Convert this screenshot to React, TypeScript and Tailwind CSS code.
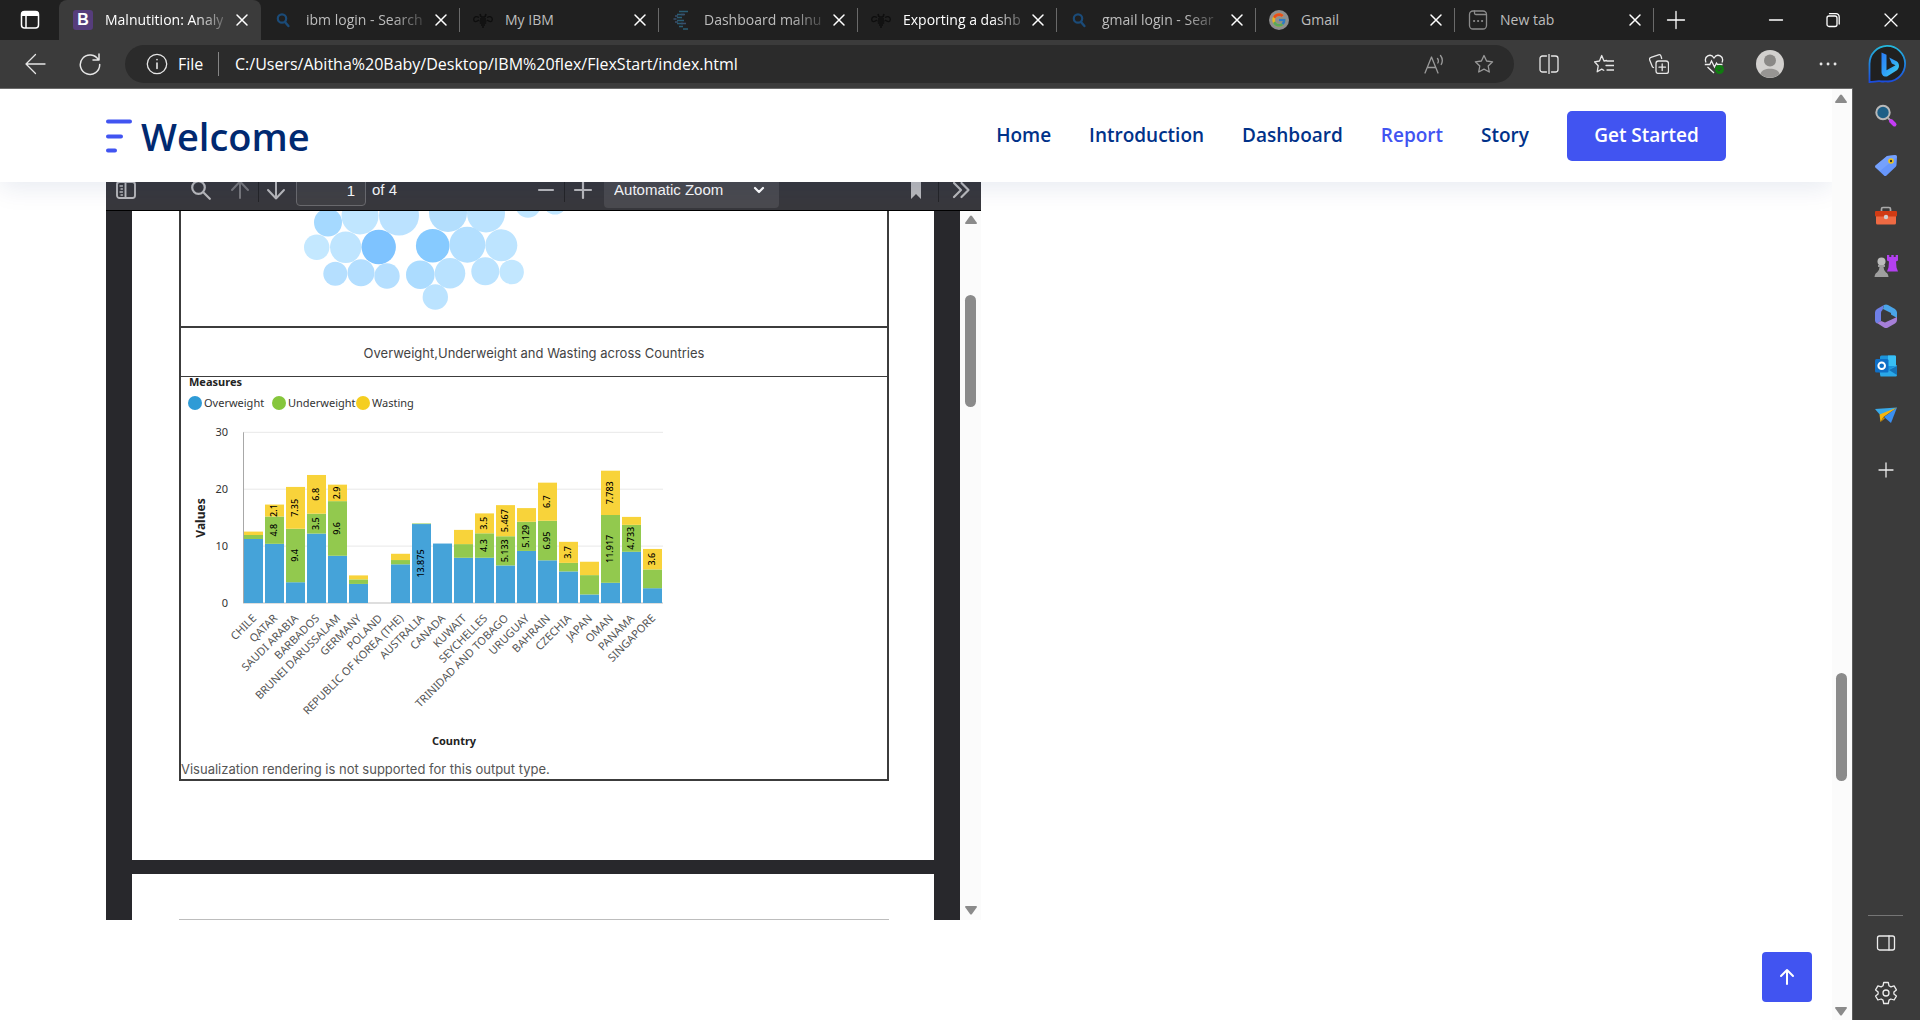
import React from "react";
import { FcGoogle } from "react-icons/fc";

type IconProps = { className?: string; children: React.ReactNode; box?: string };

function Line({ className = "size-5", children, box = "0 0 20 20" }: IconProps) {
  return (
    <svg viewBox={box} className={className} fill="none" stroke="currentColor" strokeWidth="1.3" strokeLinecap="round" strokeLinejoin="round" aria-hidden="true">
      {children}
    </svg>
  );
}

/* ---------- tab favicons ---------- */

const BootstrapIcon = () => (
  <span className="flex size-5 items-center justify-center rounded-[3px] bg-[#563d7c] font-['Liberation_Sans'] text-base font-bold leading-none text-white">B</span>
);

const SearchFavicon = () => (
  <Line className="size-5 text-[#1b4b78]">
    <circle cx="8" cy="8.5" r="4.2" strokeWidth="2.2" />
    <path d="M11 12l3.4 4" strokeWidth="2.4" />
  </Line>
);

const BeeIcon = () => (
  <svg viewBox="0 0 20 20" className="size-5" fill="none" stroke="#0e0e0e" strokeWidth="1.3" aria-hidden="true">
    <path d="M6 7.5C3 5.5 .6 7 .7 9.500s2.300 3 5.300.5M14 7.500c3-2 5.400-.5 5.300 2s-2.300 3-5.300.5" />
    <path d="M7 9h6M6.500 11h7M6.800 13h6.400M8 15h4M9 17h2M8 7l-1-3M12 7l1-3M8 7h4" strokeWidth="1.6" />
  </svg>
);

const IbmCloudIcon = () => (
  <svg viewBox="0 0 20 20" className="size-5" fill="none" strokeWidth="1.3" aria-hidden="true">
    <path d="M7 1.500h9M5 4.500h7M5 7.500h5M5 10.500h7M5 13.500h6M7 16.500h4M11 19h5" stroke="#2a5d74" />
    <path d="M3 6h3M1.500 9h3M3 12h3M9 4.500h4M9 13.500h5" stroke="#38506e" />
  </svg>
);

const GoogleIcon = () => (
  <span className="flex size-5 items-center justify-center rounded-full bg-[#8f8f8f]">
    <FcGoogle className="size-4 opacity-80" />
  </span>
);

const NewTabIcon = () => (
  <Line className="size-5 text-[#8a8a8a]">
    <rect x="1.500" y="1" width="17" height="18" rx="3.500" />
    <path d="M6.500 1v2q0 1.500 1.500 1.500h10" />
    <path d="M6 11h.2M10 11h.2M14 11h.2" strokeWidth="2" />
  </Line>
);

const tabs = [
  { title: "Malnutition: Analy", icon: <BootstrapIcon />, active: true, bright: true, fade: true },
  { title: "ibm login - Search", icon: <SearchFavicon />, fade: true },
  { title: "My IBM", icon: <BeeIcon /> },
  { title: "Dashboard malnu", icon: <IbmCloudIcon />, fade: true },
  { title: "Exporting a dashb", icon: <BeeIcon />, bright: true, fade: true },
  { title: "gmail login - Sear", icon: <SearchFavicon />, fade: true },
  { title: "Gmail", icon: <GoogleIcon /> },
  { title: "New tab", icon: <NewTabIcon /> },
];

function TabBar() {
  return (
    <div className="flex h-10 shrink-0 bg-[#202020] text-white">
      <button aria-label="Tab actions" className="flex w-[59px] shrink-0 items-center justify-center">
        <svg viewBox="0 0 20 20" className="size-5" aria-hidden="true">
          <rect x="1.500" y="1.500" width="17" height="16.500" rx="3" fill="none" stroke="#fff" strokeWidth="1.500" />
          <path d="M1.500 6V4a3 3 0 013-3h11a3 3 0 013 3v2z" fill="#fff" />
          <path d="M6 6v12" stroke="#fff" strokeWidth="1.500" />
        </svg>
      </button>
      <div className="flex min-w-0">
        {tabs.map((t, i) => (
          <div key={i} className={t.active ? "flex w-[202px] items-center rounded-t-lg bg-[#3b3b3b] pl-3.5" : "flex w-[199px] items-center pl-[13px]"}>
            <button className="flex min-w-0 flex-1 items-center gap-3">
              <span className="shrink-0">{t.icon}</span>
              <span
                className={
                  "whitespace-nowrap text-left text-sm " +
                  (t.fade ? "[mask-image:linear-gradient(to_right,black_75%,rgba(0,0,0,0.25))] " : "") +
                  (t.bright ? "text-white" : "text-[#bdbdbd]")
                }
              >
                {t.title}
              </span>
            </button>
            <button aria-label={"Close " + t.title} className="mr-2.5 shrink-0">
              <Line className="size-4" box="0 0 16 16">
                <path d="M3 3l10 10M13 3L3 13" strokeWidth="1.5" />
              </Line>
            </button>
            <span className={t.active ? "w-px" : "h-6 w-px bg-[#6a6a6a]"} />
          </div>
        ))}
      </div>
      <button aria-label="Open new tab" className="flex w-11 items-center justify-center">
        <Line className="size-5">
          <path d="M10 1.500v17M1.500 10h17" />
        </Line>
      </button>
      <div className="ml-auto flex">
        <button aria-label="Minimize" className="flex w-[57px] items-center justify-center">
          <Line className="size-4" box="0 0 16 16"><path d="M1.500 8h13" /></Line>
        </button>
        <button aria-label="Restore" className="flex w-[57px] items-center justify-center">
          <Line className="size-4" box="0 0 16 16">
            <rect x="2" y="4" width="10" height="10.500" rx="2" />
            <path d="M4.500 1.700H11a3 3 0 013.200 3V12" />
          </Line>
        </button>
        <button aria-label="Close window" className="flex w-[59px] items-center justify-center">
          <Line className="size-4" box="0 0 16 16"><path d="M2 2l12 12M14 2L2 14" /></Line>
        </button>
      </div>
    </div>
  );
}

const STAR = "M10 1.500l2.600 5.500 6 .8-4.400 4.200 1.100 6L10 15.100 4.700 18l1.100-6L1.400 7.800l6-.8z";

function AddressBar() {
  return (
    <div className="flex h-12 shrink-0 items-center bg-[#3b3b3b] text-[#e6e6e6]">
      <button aria-label="Back" className="flex w-[70px] items-center justify-center">
        <Line className="size-6" box="0 0 24 24"><path d="M22 12H3M12.500 2.500L3 12l9.500 9.500" /></Line>
      </button>
      <button aria-label="Refresh" className="flex w-10 items-center justify-center">
        <Line className="size-6" box="0 0 24 24">
          <path d="M20.500 8A9.700 9.700 0 1021.700 12.500M21 2v6h-6" strokeWidth="1.500" />
        </Line>
      </button>
      <div className="ml-[15px] flex h-[38px] flex-1 items-center rounded-full bg-[#2b2b2b] pl-[21px] pr-5">
        <Line className="size-[22px]" box="0 0 22 22">
          <circle cx="11" cy="11" r="9.700" />
          <path d="M11 10v5.500M11 6.500v.3" strokeWidth="1.600" />
        </Line>
        <span className="ml-2.5 w-[30px] text-base text-white">File</span>
        <span className="ml-2.5 h-6 w-px bg-[#858585]" />
        <input aria-label="Address" readOnly value="C:/Users/Abitha%20Baby/Desktop/IBM%20flex/FlexStart/index.html" className="ml-4 min-w-0 flex-1 bg-transparent text-base text-white outline-none" />
        <div className="flex items-center gap-[30px] text-[#9a9a9a]">
          <button aria-label="Read aloud">
            <Line>
              <path d="M1 19L7.500 3 14 19M3.300 13.500h8.400M13.500 4.500c1 1.300 1 3.200.3 4.500M16.500 1.500c2 2.600 2.200 6.200.7 9" />
            </Line>
          </button>
          <button aria-label="Add to favorites"><Line><path d={STAR} /></Line></button>
        </div>
      </div>
      <div className="ml-[25px] flex items-center gap-[35px]">
        <button aria-label="Split screen">
          <Line>
            <path d="M7.500 2H3.500A2.500 2.500 0 001 4.500v11A2.500 2.500 0 003.500 18h4M12.500 2h4A2.500 2.500 0 0119 4.500v11a2.500 2.500 0 01-2.500 2.500h-4M10 0v20" />
          </Line>
        </button>
        <button aria-label="Favorites">
          <Line>
            <path d="M12.500 6.500L10 7l-2.300-5.500L5.500 7l-5 .8 3.700 4-1 6 4.500-2.700 2 1.200M13 7h7M12 11.500h8M13 16h7" />
          </Line>
        </button>
        <button aria-label="Collections">
          <Line>
            <rect x="7" y="7" width="12.500" height="12.500" rx="2.500" />
            <path d="M13.200 10v6.500M10 13.200h6.500M4.500 13.500L3.500 13 .7 6a2 2 0 011.300-2.700L9.500.8a2 2 0 012.500 1.300l.7 2.400" />
          </Line>
        </button>
        <button aria-label="Browser essentials">
          <svg viewBox="0 0 20 20" className="size-5" aria-hidden="true">
            <path d="M2 8.500C-.5 2.500 6.500-1.500 10 4c3.500-5.500 10.500-1.500 8 4.500M.8 10.500h5L7.500 7l3 6 2-4 1 1.500h5M3.500 13L10 19" fill="none" stroke="#eee" strokeWidth="1.300" />
            <circle cx="15.500" cy="15.500" r="4.500" fill="#107c10" />
            <path d="M13.500 15.500l1.500 1.500 2.500-3" stroke="#3b3b3b" fill="none" />
          </svg>
        </button>
      </div>
      <button aria-label="Profile" className="ml-8">
        <svg viewBox="0 0 28 28" className="size-7" aria-hidden="true">
          <circle cx="14" cy="14" r="14" fill="#d2d0ce" />
          <circle cx="14" cy="10.500" r="6" fill="#8a8886" />
          <path d="M4.500 24c1-7 18-7 19 0A14 14 0 014.500 24z" fill="#979593" />
        </svg>
      </button>
      <button aria-label="Settings and more" className="ml-[34px]">
        <Line><path d="M3 10h.1M10 10h.1M17 10h.1" strokeWidth="2.800" /></Line>
      </button>
      <button aria-label="Bing chat" className="ml-[30px] mr-3.5">
        <svg viewBox="0 0 38 38" className="size-[38px]" aria-hidden="true">
          <defs>
            <linearGradient id="bingRing" x1="0" y1="0" x2="0" y2="1">
              <stop offset="0" stopColor="#24b8dc" />
              <stop offset="1" stopColor="#1b4bdc" />
            </linearGradient>
            <linearGradient id="bingB" x1="0" y1="0" x2="1" y2="1">
              <stop offset="0" stopColor="#2b7cf5" />
              <stop offset=".5" stopColor="#2f9ff8" />
              <stop offset="1" stopColor="#3fd6e6" />
            </linearGradient>
          </defs>
          <path d="M1.500 37V19A17.800 17.800 0 1120 36.500c-3-.2-5 .2-7-.2-4-.6-7 .7-11.500.7z" fill="#202020" stroke="url(#bingRing)" strokeWidth="1.800" />
          <path d="M13.500 7.500l5 2.200v15.500l9-5-3.700-1.800-2.600-6 7.800 4c3 2.500 2.500 7-.5 9l-9.500 6c-3 1-5.500-1.500-5.500-4.500z" fill="url(#bingB)" />
        </svg>
      </button>
    </div>
  );
}

/* ---------- site header ---------- */

const nav = ["Home", "Introduction", "Dashboard", "Report", "Story"];

function SiteHeader() {
  return (
    <header className="relative z-10 h-[93px] shrink-0 bg-white shadow-[0_5px_25px_rgba(1,41,112,0.1)]">
      <div className="mx-auto flex h-full w-full max-w-[1620px] items-center justify-between">
        <a href="#home" className="flex items-center gap-2 text-[#012970]">
          <svg viewBox="0 0 27 34" className="h-[34px] w-[27px]" stroke="#4154f1" strokeWidth="4" strokeLinecap="round" aria-hidden="true">
            <path d="M2 2.500h22M2 17.500h13M2 31.500h7" />
          </svg>
          <span className="text-[38px] font-semibold leading-none">Welcome</span>
        </a>
        <nav className="flex items-center gap-[38px] text-[19px] font-semibold text-[#013289]">
          {nav.map((n) => (
            <a key={n} href={"#" + n.toLowerCase()} className={n === "Report" ? "text-[#4154f1]" : ""}>{n}</a>
          ))}
          <a href="#start" className="flex h-[50px] w-[159px] items-center justify-center rounded-[5px] bg-[#4154f1] text-white">Get Started</a>
        </nav>
      </div>
    </header>
  );
}

/* ---------- embedded report ---------- */

const bubbles: [number, number, number, string][] = [
  [328, 222.500, 14, "#a5d9ff"], [360, 216, 18.500, "#c0e6ff"], [399, 215.500, 20, "#bbe2ff"],
  [448, 213, 19, "#b3defd"], [486, 213.500, 19, "#bbe3ff"], [528, 205, 12.700, "#c0e6ff"], [555, 203, 11.500, "#c0e6ff"],
  [316.700, 247.300, 12.700, "#c4e8ff"], [345.700, 247.300, 15.700, "#bfe5ff"], [378.700, 247, 17.200, "#7ec3ff"],
  [432.700, 245.700, 16.800, "#86caff"], [467.300, 244.700, 18, "#b3dfff"], [501.300, 245.300, 16, "#bde4ff"],
  [335.300, 273.700, 12, "#b5dfff"], [361, 272.700, 13.500, "#b3deff"], [387, 276, 12.700, "#b5dfff"],
  [420.300, 274.700, 14.300, "#acdcff"], [450, 273.300, 15.300, "#b9e2ff"], [485.300, 271.300, 14, "#bbe3ff"],
  [511.700, 272, 12.200, "#c2e7ff"], [435.300, 297, 12.700, "#bbe3ff"],
];

type Bar = { name: string; v: [number, number, number]; labels?: [string?, string?, string?] };

const bars: Bar[] = [
  { name: "CHILE", v: [11.25, 0.7, 0.6] },
  { name: "QATAR", v: [10.4, 4.8, 2.1], labels: [, "4.8", "2.1"] },
  { name: "SAUDI ARABIA", v: [3.65, 9.4, 7.35], labels: [, "9.4", "7.35"] },
  { name: "BARBADOS", v: [12.2, 3.5, 6.8], labels: [, "3.5", "6.8"] },
  { name: "BRUNEI DARUSSALAM", v: [8.3, 9.6, 2.9], labels: [, "9.6", "2.9"] },
  { name: "GERMANY", v: [3.35, 0.8, 0.7] },
  { name: "POLAND", v: [0, 0, 0] },
  { name: "REPUBLIC OF KOREA (THE)", v: [6.8, 0.75, 1.1] },
  { name: "AUSTRALIA", v: [13.875, 0.1, 0], labels: ["13.875"] },
  { name: "CANADA", v: [10.45, 0, 0] },
  { name: "KUWAIT", v: [7.95, 2.4, 2.5] },
  { name: "SEYCHELLES", v: [7.95, 4.3, 3.5], labels: [, "4.3", "3.5"] },
  { name: "TRINIDAD AND TOBAGO", v: [6.6, 5.133, 5.467], labels: [, "5.133", "5.467"] },
  { name: "URUGUAY", v: [9.15, 5.129, 2.4], labels: [, "5.129"] },
  { name: "BAHRAIN", v: [7.5, 6.95, 6.7], labels: [, "6.95", "6.7"] },
  { name: "CZECHIA", v: [5.55, 1.5, 3.7], labels: [, , "3.7"] },
  { name: "JAPAN", v: [1.5, 3.4, 2.35] },
  { name: "OMAN", v: [3.55, 11.917, 7.783], labels: [, "11.917", "7.783"] },
  { name: "PANAMA", v: [9, 4.733, 1.4], labels: [, "4.733"] },
  { name: "SINGAPORE", v: [2.6, 3.3, 3.6], labels: [, , "3.6"] },
];

const fills = ["#45a3d9", "#92c94e", "#f8d33a"];

function StackedBarChart() {
  const base = 226;
  const unit = 5.69;
  return (
    <svg viewBox="1 0 500 380" className="h-[380px] w-[500px] font-['Noto_Sans'] text-[11px]" fill="#333" role="img" aria-label="Overweight, Underweight and Wasting by country">
      <text x="9" y="9" fontWeight="700" fill="#222">Measures</text>
      {[
        { x: 15, c: "#2f9bd6", t: "Overweight" },
        { x: 99, c: "#86c63c", t: "Underweight" },
        { x: 183, c: "#f5ce20", t: "Wasting" },
      ].map((l) => (
        <g key={l.t}>
          <circle cx={l.x} cy="26" r="7" fill={l.c} />
          <text x={l.x + 9} y="30">{l.t}</text>
        </g>
      ))}
      {[30, 20, 10, 0].map((n) => (
        <g key={n}>
          <path d={`M63 ${base - n * unit}h420`} stroke={n ? "#e8e8e8" : "#bdbdbd"} />
          <text x="48" y={base - n * unit + 4} textAnchor="end">{n}</text>
        </g>
      ))}
      <path d={`M63.500 ${base - 30 * unit}V${base}`} stroke="#a8a8a8" />
      <text transform="translate(25 141) rotate(-90)" textAnchor="middle" fontSize="12" fontWeight="700" fill="#222">Values</text>
      {bars.map((b, i) => {
        let sum = 0;
        const x = 64 + i * 21;
        return (
          <g key={b.name}>
            {b.v.map((v, k) => {
              const y = base - (sum + v) * unit;
              const mid = y + (v * unit) / 2;
              sum += v;
              const label = b.labels?.[k];
              return (
                <g key={k}>
                  <rect x={x} y={y} width="19" height={v * unit} fill={fills[k]} />
                  {label && (
                    <text transform={`translate(${x + 12} ${mid}) rotate(-90)`} textAnchor="middle" fontSize="9" fontWeight="500" fill="#000">{label}</text>
                  )}
                </g>
              );
            })}
            <text transform={`translate(${x + 13} 242) rotate(-45)`} textAnchor="end" fill="#555">{b.name}</text>
          </g>
        );
      })}
      <text x="274" y="368" textAnchor="middle" fontWeight="700" fill="#222">Country</text>
    </svg>
  );
}

const Triangle = ({ down }: { down?: boolean }) => (
  <svg viewBox="0 0 12 9" className="h-[9px] w-3" fill="#8b8b8b" aria-hidden="true">
    <path d={down ? "M0 1Q0 0 1 0h10q1 0 1 1L7 8q-1 1-2 0z" : "M0 8q0 1 1 1h10q1 0 1-1L7 1Q6 0 5 1z"} />
  </svg>
);

function PdfToolbar() {
  return (
    <div className="flex h-[41px] shrink-0 items-center border-b border-black bg-[#38383d] pl-2.5 font-['Liberation_Sans'] text-[15px] text-[#b8b8bb]">
      <button aria-label="Toggle sidebar">
        <Line className="size-5">
          <rect x="1" y="2" width="18" height="16" rx="2.500" strokeWidth="1.900" />
          <path d="M9.500 2v16" strokeWidth="1.900" />
          <path d="M4 6h2.500M5 9h1.500M4 12h2.500M5 15h1.500" />
        </Line>
      </button>
      <button aria-label="Find" className="ml-[55px]">
        <Line className="size-5"><circle cx="7.500" cy="7.500" r="6.300" strokeWidth="2.200" /><path d="M12.500 12.500l6.300 6.300" strokeWidth="2.200" /></Line>
      </button>
      <button aria-label="Previous page" className="ml-[19px] text-[#77777b]" disabled>
        <Line className="size-5"><path d="M10 18V1.500M2 10l8-8.500 8 8.500" strokeWidth="2" /></Line>
      </button>
      <span className="ml-2 mr-[7px] h-6 w-px bg-[#242427]" />
      <button aria-label="Next page">
        <Line className="size-5"><path d="M10 2v16.500M2 10l8 8.500 8-8.500" strokeWidth="2" /></Line>
      </button>
      <input aria-label="Page" defaultValue="1" className="ml-2.5 h-8 w-[70px] rounded-sm border border-[#6a6a6e] bg-[#404044] pr-2.5 text-right text-[#f9f9fa]" />
      <span className="ml-1.5 text-[#f9f9fa]">of 4</span>
      <button aria-label="Zoom out" className="ml-[139px]">
        <Line className="size-5"><path d="M3 10h14" strokeWidth="2.200" /></Line>
      </button>
      <span className="mx-2 h-6 w-px bg-[#242427]" />
      <button aria-label="Zoom in">
        <Line className="size-5"><path d="M2 10h16M10 2v16" strokeWidth="2.200" /></Line>
      </button>
      <div className="relative ml-[11px]">
        <select aria-label="Zoom" className="h-9 w-[175px] appearance-none rounded-sm bg-[#4a4a4f] pl-2.5 text-[#f9f9fa]">
          <option>Automatic Zoom</option>
        </select>
        <Line className="pointer-events-none absolute right-3.5 top-3 size-3 text-white" box="0 0 12 12"><path d="M2 4l4 4 4-4" strokeWidth="2.200" /></Line>
      </div>
      <button aria-label="Current view" className="ml-auto mr-[17px]">
        <svg viewBox="0 0 10 18" className="h-[18px] w-2.5" fill="currentColor" aria-hidden="true"><path d="M0 0h10v18l-5-5-5 5z" /></svg>
      </button>
      <span className="h-6 w-px bg-[#242427]" />
      <button aria-label="Tools" className="ml-3 mr-2.5">
        <Line className="size-5"><path d="M3 3l7 7-7 7M10.500 3l7 7-7 7" strokeWidth="2.200" /></Line>
      </button>
    </div>
  );
}

function PdfViewer() {
  return (
    <section aria-label="Report" className="-mt-3 flex h-[750px] w-[875px] max-w-full shrink-0 flex-col">
      <PdfToolbar />
      <div className="flex min-h-0 flex-1">
        <div className="flex min-w-0 flex-1 flex-col gap-3.5 overflow-hidden bg-[#28282c] px-[26px]">
          <article className="h-[649px] shrink-0 bg-white pl-[47px] pr-[45px]">
            <div className="border-x-2 border-b-2 border-[#3c3c3c]">
              <svg viewBox="181 211 706 115" className="block h-[115px] w-full" aria-hidden="true">
                {bubbles.map(([x, y, r, c], i) => (
                  <circle key={i} cx={x} cy={y} r={r} fill={c} />
                ))}
              </svg>
              <h2 className="flex h-[51px] items-center justify-center border-b border-t-2 border-[#3c3c3c] pt-1 font-['Inter'] text-[13px] text-[#444]">
                Overweight,Underweight and Wasting across Countries
              </h2>
              <StackedBarChart />
              <p className="pt-0.5 font-['Inter'] text-[13px] leading-5 text-[#555]">Visualization rendering is not supported for this output type.</p>
            </div>
          </article>
          <article className="h-40 shrink-0 bg-white pl-[47px] pr-[45px] pt-[45px]">
            <hr className="border-[#bdbdbd]" />
          </article>
        </div>
        <div className="flex w-[21px] flex-col items-center bg-[#fbfbfb] pb-[5px] pt-1">
          <Triangle />
          <div className="mt-[71px] h-28 w-[11px] rounded-full bg-[#8b8b8b]" />
          <div className="mt-auto"><Triangle down /></div>
        </div>
      </div>
    </section>
  );
}

/* ---------- browser sidebar ---------- */

const Art = ({ children }: { children: React.ReactNode }) => (
  <svg viewBox="0 0 24 24" className="size-6" aria-hidden="true">{children}</svg>
);

const apps = [
  {
    name: "Search",
    art: (
      <Art>
        <path d="M14 14l3 3" stroke="#aaa" strokeWidth="2" />
        <path d="M17 17l3.500 3.500" stroke="#c53cf5" strokeWidth="4" strokeLinecap="round" />
        <circle cx="9" cy="8.500" r="6.700" fill="#1d5f86" stroke="#b9b9b9" strokeWidth="2" />
      </Art>
    ),
  },
  {
    name: "Shopping",
    art: (
      <Art>
        <path d="M13 2l8-1q2 0 2 2l-.5 8q0 1-1 2l-9 8.500q-1.500 1-2.500 0L1.500 13.500q-1-1 0-2z" fill="#6796fb" />
        <path d="M13 2l8-1q2 0 2 2L6 17l-4.500-3.500q-1-1 0-2z" fill="#7fa8ff" opacity=".6" />
        <circle cx="17" cy="7" r="2" fill="#333" stroke="#f0c419" strokeWidth="1.600" />
      </Art>
    ),
  },
  {
    name: "Tools",
    art: (
      <Art>
        <path d="M7.500 7V5q0-1.500 1.500-1.500h6q1.500 0 1.500 1.500v2" stroke="#aaa" strokeWidth="1.700" fill="none" />
        <path d="M2 11h20v8q0 1.500-1.500 1.500h-17Q2 20.500 2 19z" fill="#ee6a43" />
        <rect x="1" y="7" width="22" height="5.500" rx="1" fill="#d03b14" />
        <circle cx="12" cy="13" r="2.200" fill="#d0d0d0" />
      </Art>
    ),
  },
  {
    name: "Games",
    art: (
      <Art>
        <path d="M13 1h2.300v2h2V1h2.400v2h2V1H24v5.500l-2 1 .5 6 1.500 4H13l1.500-4 .5-6-2-1z" fill="#b340f0" />
        <circle cx="7.500" cy="7.500" r="4" fill="#bcbcbc" />
        <path d="M4 11h7v2H9.500q.3 4 2.500 5.500 2 .5 2.500 4.500H.5q.5-4 2.500-4.500Q5.300 17 5.500 13H4z" fill="#9e9e9e" />
      </Art>
    ),
  },
  {
    name: "Microsoft 365",
    art: (
      <Art>
        <path d="M10 1L3 5Q1 6 1 8.500v8q0 2 2 3l4-2.500V9q0-2 1.500-3z" fill="#6f7fe6" />
        <path d="M10 1q2-1 4 0l7 4q2 1.500 2 3.500V14l-6-3.500V9L9 5z" fill="#4aa5e8" />
        <path d="M23 13v3q0 2-2 3.500l-7 4q-2 1-4 0l-7-4.500 4-2 4 1.500z" fill="#a67fd8" />
        <path d="M12 8l3.500 2v4L12 16.200 8.500 14v-4z" fill="#3b3b3b" />
      </Art>
    ),
  },
  {
    name: "Outlook",
    art: (
      <Art>
        <rect x="6" y="1.500" width="16" height="20" rx="1.500" fill="#1c95dc" />
        <path d="M14 1.500h7q1 0 1 1V12h-8z" fill="#38c0f5" />
        <path d="M5 14l9 2 9-5v10q0 1.500-1.500 1.500h-15z" fill="#2aa8e8" />
        <path d="M23 12v9l-8-5z" fill="#1472b8" />
        <rect x="1" y="5" width="13.500" height="13.500" rx="1.500" fill="#0f6fc6" />
        <circle cx="7.700" cy="11.700" r="3.300" fill="none" stroke="#fff" strokeWidth="2" />
      </Art>
    ),
  },
  {
    name: "Drop",
    art: (
      <Art>
        <path d="M1 5l22-1.500L7 12z" fill="#39a9e8" />
        <path d="M23 3.500L17 19l-7-6z" fill="#3b8ff0" />
        <path d="M23 3.500L5.500 10.500l1 7.500 3-5z" fill="#f5b50e" />
        <path d="M6.500 18l3-5 1.500 1.500z" fill="#c98600" />
      </Art>
    ),
  },
];

function EdgeSidebar() {
  return (
    <aside className="flex w-[68px] shrink-0 flex-col items-center border-l border-[#5c5c5c] bg-[#3b3b3b] pb-[15px] pr-0.5 pt-4 text-[#ececec]">
      <div className="flex flex-col gap-[26px]">
        {apps.map((a) => (
          <button key={a.name} aria-label={a.name}>{a.art}</button>
        ))}
        <button aria-label="Customize" className="mt-1.5 flex justify-center">
          <Line className="size-5"><path d="M10 3v14M3 10h14" /></Line>
        </button>
      </div>
      <div className="mt-auto flex flex-col items-center">
        <span className="h-px w-[35px] bg-[#757575]" />
        <button aria-label="Hide sidebar" className="mt-[17px]">
          <Line className="size-5"><rect x="1.500" y="3" width="17" height="14" rx="2" /><path d="M13 3v14" /></Line>
        </button>
        <button aria-label="Settings" className="mt-7">
          <Line className="size-6" box="0 0 24 24">
            <path d="M9.700 2.500h4.600l.7 3.300 1.900 1.100 3.200-1 2.300 4-2.500 2.100v2l2.500 2.100-2.300 3.900-3.200-1-1.900 1.100-.7 3.400H9.700L9 20.100 7.100 19l-3.200 1-2.300-3.900L4.100 14v-2L1.600 9.900l2.300-4 3.200 1L9 5.800z" transform="translate(0 -1)" />
            <circle cx="12" cy="12" r="3" />
          </Line>
        </button>
      </div>
    </aside>
  );
}

export default function App() {
  return (
    <div className="flex h-screen flex-col overflow-hidden bg-white font-['Open_Sans',sans-serif]">
      <TabBar />
      <AddressBar />
      <div className="flex min-h-0 flex-1">
        <main className="relative flex min-w-0 flex-1 flex-col overflow-hidden border-t border-[#6b6b6b]">
          <SiteHeader />
          <div className="mx-auto w-full max-w-[1620px]">
            <PdfViewer />
          </div>
          <a href="#top" aria-label="Back to top" className="absolute bottom-[18px] right-5 flex size-[50px] items-center justify-center rounded bg-[#4154f1] text-white">
            <Line className="size-5"><path d="M10 17V3M4 9l6-6 6 6" strokeWidth="2" /></Line>
          </a>
        </main>
        <div className="flex w-5 shrink-0 flex-col items-center border-t border-[#6b6b6b] bg-[#fbfbfb] pb-1 pr-0.5 pt-[5px]">
          <Triangle />
          <div className="mt-[570px] h-[108px] w-[11px] rounded-full bg-[#8b8b8b]" />
          <div className="mt-auto"><Triangle down /></div>
        </div>
        <EdgeSidebar />
      </div>
    </div>
  );
}
